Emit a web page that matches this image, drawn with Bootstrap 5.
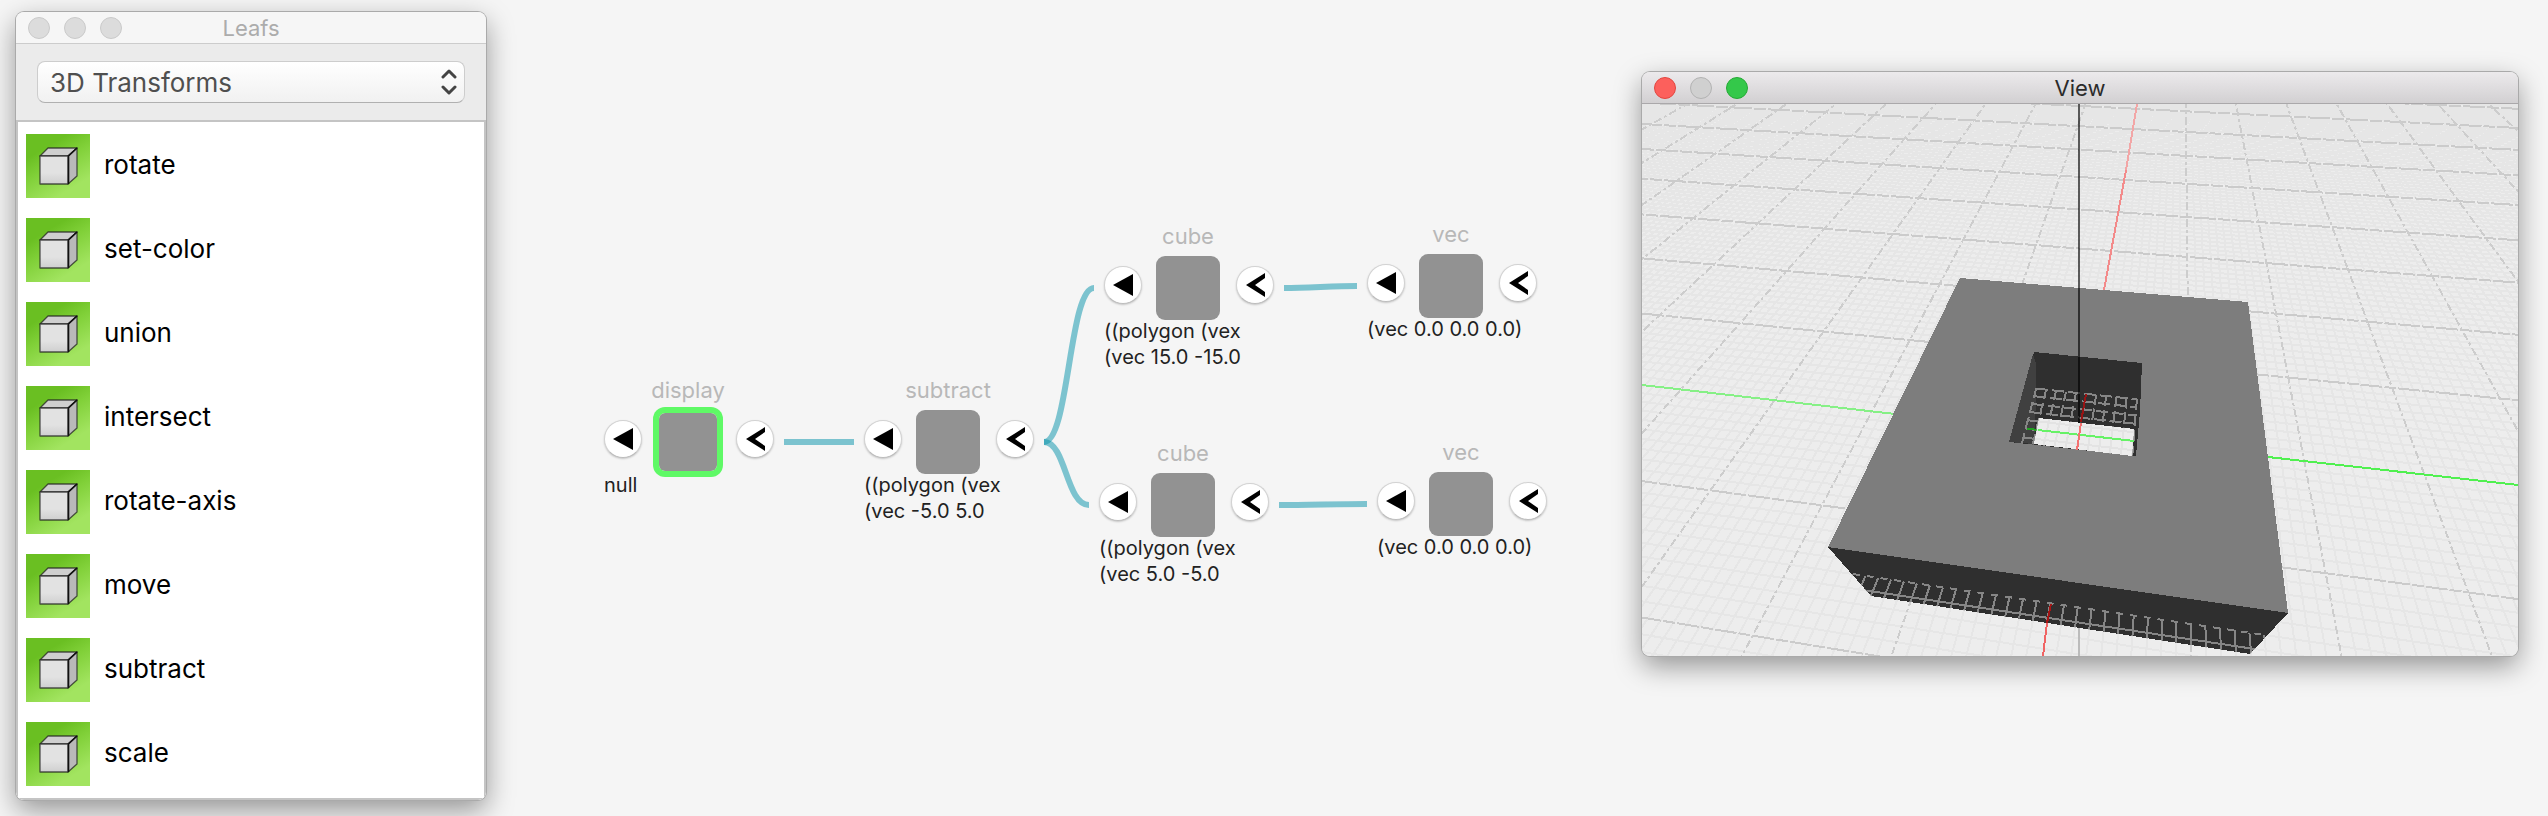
<!DOCTYPE html>
<html lang="en">
<head>
<meta charset="utf-8">
<meta name="viewport" content="width=device-width, initial-scale=1">
<title>Leafs</title>
<link href="https://cdn.jsdelivr.net/npm/bootstrap@5.3.0/dist/css/bootstrap.min.css" rel="stylesheet">
<style>
  body { background: #f5f5f5; font-family: Inter, "Liberation Sans", sans-serif; color: #000; }
  .desktop { padding: 12px 30px 16px 16px; min-height: 100vh; }

  /* windows */
  .win { border-radius: 8px; box-shadow: 0 0 0 1px #aaa, 0 10px 28px rgba(0,0,0,.4); overflow: hidden; }
  .titlebar { height: 32px; padding: 0 12px; display: grid; grid-template-columns: 1fr auto 1fr; align-items: center; border-bottom: 1px solid #ccc; font-size: 22px; line-height: 28px; }
  .titlebar.idle { background: #f6f6f6; color: #acacac; }
  .titlebar.active { background: linear-gradient(#eceaec, #d2d0d2); border-color: #aaa8aa; color: #2b2b2b; }
  .lights { gap: 14px; }
  .light { width: 22px; height: 22px; border-radius: 50%; padding: 0; border: 1px solid #c9c9c9; background: #dcdcdc; }
  .light.close-on { background: #fc605c; border-color: #e2463f; }
  .light.min-off { background: #d0d0d0; border-color: #b2b2b2; }
  .light.zoom-on { background: #34c84a; border-color: #25a935; }

  /* palette */
  .palette { flex: 0 0 470px; }
  .picker { background: #ebebeb; padding: 17px 21px; }
  .picker-box { position: relative; }
  .picker select { appearance: none; width: 100%; height: 42px; padding: 2px 12px 0; border: 1px solid #cdcdcd; border-bottom-color: #b0b0b0; border-radius: 8px; background: linear-gradient(#fff, #f1f1f1); color: #4f4f4f; font-size: 26px; line-height: 36px; }
  .picker svg { position: absolute; right: 8px; top: 8px; pointer-events: none; }
  .leafs { background: #fff; border: 2px solid #c4c4c4; padding: 12px 8px; row-gap: 20px; }
  .leaf { gap: 14px; font-size: 26px; line-height: 32px; }
  .leaf span { padding-bottom: 2px; }

  /* node graph */
  .graph { position: relative; flex: 1 1 0; }
  .graph .wires { position: absolute; left: 0; top: 0; overflow: visible; }
  .wires path { fill: none; stroke: rgba(3,146,170,.5); stroke-width: 6; }
  .node { position: absolute; width: 170px; }
  .node-name { font-size: 22px; line-height: 26px; height: 33px; padding-right: 2px; color: #b8b8b8; }
  .tile { width: 64px; height: 64px; margin-right: 2px; border-radius: 9px; background: #929292; }
  .tile.chosen { background-clip: padding-box; border: 3px solid #5ff966; box-shadow: 0 0 0 3px #5ff966; }
  .knob { width: 38px; height: 38px; margin-top: 10px; padding: 0; border: 1px solid #d2d2d2; border-bottom-color: #bcbcbc; border-radius: 50%; background: #fff; box-shadow: 0 1px 2px rgba(0,0,0,.2); display: grid; place-items: center; }
  .node-value { margin-top: -2px; font-size: 20px; line-height: 26px; color: #222; white-space: pre; }

  /* viewer */
  .viewer { flex: 0 1 876px; margin-top: 60px; }
  .viewer svg.scene { display: block; width: 100%; height: auto; background: #ededed; }
</style>
</head>
<body>
<main class="desktop d-flex align-items-start">

  <section class="palette win" aria-label="Leafs">
    <header class="titlebar idle">
      <div class="lights d-flex">
        <button class="light" aria-label="Close"></button><button class="light" aria-label="Minimize"></button><button class="light" aria-label="Zoom"></button>
      </div>
      <span>Leafs</span>
    </header>
    <div class="picker">
      <div class="picker-box">
        <select aria-label="Category"><option>3D Transforms</option></select>
        <svg width="16" height="26" viewBox="0 0 16 26" fill="none" stroke="#444" stroke-width="3" stroke-linecap="round" stroke-linejoin="round"><path d="M2 8 8 2l6 6M2 18l6 6 6-6"/></svg>
      </div>
    </div>
    <ul class="leafs list-unstyled d-flex flex-column mb-0" id="leafs"></ul>
  </section>

  <section class="graph" id="graph" aria-label="Graph">
    <svg class="wires" width="1" height="1">
      <path d="M298 430H368"/>
      <path d="M558 430C583 430 583 276 608 276"/>
      <path d="M558 430C580 430 580 493 603 493"/>
      <path d="M798 276C822 276 847 274 871 274"/>
      <path d="M793 493C822 493 852 492 881 492"/>
    </svg>
  </section>

  <section class="viewer win" aria-label="View">
    <header class="titlebar active">
      <div class="lights d-flex">
        <button class="light close-on" aria-label="Close"></button><button class="light min-off" aria-label="Minimize"></button><button class="light zoom-on" aria-label="Zoom"></button>
      </div>
      <span>View</span>
    </header>
    <svg class="scene" viewBox="1642 104 876 552" shape-rendering="crispEdges" fill="none" stroke-width="2">
      <defs>
        <clipPath id="front"><path d="M1828 547 2288 613 2250 654 1871 596Z"/></clipPath>
        <clipPath id="pit"><path d="M2034 352 2142 363 2140 412 2136 456 2009 442Z"/></clipPath>
        <clipPath id="floor"><path d="M2039 418 2134 429 2132 456 2034 444Z"/></clipPath>
      </defs>
      <path id="minor" stroke="#e6e6e6"/>
      <path id="rows" stroke="#cbcbcb" stroke-dasharray="22 2 12 2"/>
      <path id="cols" stroke="#cdcdcd" stroke-dasharray="8 3 3 3"/>
      <path d="M2137 104 2126 170" stroke="#f2a6a6"/>
      <path d="M2126 170 2104 290" stroke="#f38a8a"/>
      <path d="M1642 385 1895 414" stroke="#86f086"/>
      <path d="M2268 457 2518 485" stroke="#50f050"/>
      <path d="M2047 623 2043 656" stroke="#f06464"/>
      <path d="M2079 625V656" stroke="#bbb"/>
      <path d="M1960 278 2248 302 2288 613 1828 547Z" fill="#7d7d7d"/>
      <path d="M1828 547 2288 613 2250 654 1871 596Z" fill="#2f2f2f"/>
      <g clip-path="url(#front)"><path id="frontgrid" stroke="#868686"/><path id="frontedge" stroke="#868686" stroke-dasharray="7 7"/></g>
      <path d="M2051 604 2047 623" stroke="#a41414"/>
      <path d="M2034 352 2142 363 2140 412 2136 456 2009 442Z" fill="#2f2f2f"/>
      <path d="M2033 354 2036 364 2036 400 2034 444 2009 442Z" fill="#404040"/>
      <g clip-path="url(#pit)"><path id="pitgrid" stroke="#868686" stroke-dasharray="12 4"/></g>
      <path d="M2086 394 2081 422" stroke="#981414"/>
      <path d="M2027 429 2040 430" stroke="#22a022"/>
      <path d="M2039 418 2134 429 2132 456 2034 444Z" fill="#ededed"/>
      <g clip-path="url(#floor)"><path id="floorgrid" stroke="#e3e3e3"/></g>
      <path d="M2038 430 2134 441" stroke="#66f266"/>
      <path d="M2081 423 2077 450" stroke="#f47272"/>
      <path d="M2079 104V423" stroke="#000" stroke-opacity=".62"/>
    </svg>
  </section>
</main>

<script src="https://cdn.jsdelivr.net/npm/bootstrap@5.3.0/dist/js/bootstrap.bundle.min.js"></script>
<script>
  // palette entries
  const cube = `<svg width="64" height="64" viewBox="0 0 64 64" aria-hidden="true">
    <defs><linearGradient id="gr" x1="0.2" y1="0" x2="0.8" y2="1"><stop offset=".2" stop-color="#6abf22"/><stop offset=".45" stop-color="#80d038"/><stop offset=".85" stop-color="#a2e460"/></linearGradient>
    <linearGradient id="fc" x1="0" y1="0" x2="0" y2="1"><stop offset=".6" stop-color="#e2e2e2"/><stop offset="1" stop-color="#cfcfcf"/></linearGradient></defs>
    <rect width="64" height="64" fill="url(#gr)"/>
    <g stroke="#222" stroke-opacity=".75" stroke-width="1.3" stroke-linejoin="round">
    <path fill="#cfcfcf" d="M14 22 22 14H51L42 22Z"/><path fill="#b9b9b9" d="M42 22 51 14V42L42 50Z"/><path fill="url(#fc)" d="M14 22H42V50H14Z"/></g>
    <path d="M42.500 50V22L51 14" fill="none" stroke="#111" stroke-width="1.600"/></svg>`;
  document.getElementById('leafs').innerHTML =
    ['rotate','set-color','union','intersect','rotate-axis','move','subtract','scale']
    .map(n => `<li class="leaf d-flex align-items-center">${cube}<span>${n}</span></li>`).join('');

  // graph nodes: left edge and top of the name, relative to the graph area
  const nodes = [
    [118, 365, 'display', 'null', true],
    [378, 365, 'subtract', '((polygon (vex\n(vec -5.0 5.0'],
    [618, 211, 'cube', '((polygon (vex\n(vec 15.0 -15.0'],
    [881, 209, 'vec', '(vec 0.0 0.0 0.0)'],
    [613, 428, 'cube', '((polygon (vex\n(vec 5.0 -5.0'],
    [891, 427, 'vec', '(vec 0.0 0.0 0.0)']
  ];
  const out = '<svg width="24" height="24"><path d="M2 12 22 1V23Z"/></svg>';
  const inn = '<svg width="24" height="24"><path d="M3 12 22 0V5L12 12 22 19V24Z"/></svg>';
  for (const [x, y, name, value, chosen] of nodes) {
    document.getElementById('graph').insertAdjacentHTML('beforeend',
      `<div class="node" style="left:${x}px;top:${y}px"><div class="node-name text-center">${name}</div>
       <div class="d-flex justify-content-between align-items-start"><button class="knob" aria-label="Output">${out}</button><div class="tile${chosen ? ' chosen' : ''}"></div><button class="knob" aria-label="Input">${inn}</button></div>
       <div class="node-value">${value}</div></div>`);
  }

  // ground plane: perspective projection of grid coordinates (u, v)
  const P = (u, v) => {
    const w = 1 - .021 * u + .1445 * v;
    return (2079 + (107.85 * u + 15.03 * v) / w).toFixed(1) + ' ' + (434.9 + (12.32 * u - 87.9 * v) / w).toFixed(1);
  };
  const seg = (a, b, c, d) => `M${P(a, b)}L${P(c, d)}`;
  function grid(u0, u1, v0, v1, skip) {
    let d = '';
    for (let i = Math.round(u0 * 10); i <= Math.round(u1 * 10); i++) if (!skip || i % 10) d += seg(i / 10, v0, i / 10, v1);
    for (let i = Math.round(v0 * 10); i <= Math.round(v1 * 10); i++) if (!skip || i % 10) d += seg(u0, i / 10, u1, i / 10);
    return d;
  }
  const set = (id, d) => document.getElementById(id).setAttribute('d', d);
  set('minor', grid(-16, 16, -3, 12, true));
  let cols = '', rows = '';
  for (let i = -16; i <= 16; i++) if (i) cols += seg(i, -3, i, 12);
  for (let i = -3; i <= 12; i++) if (i) rows += seg(-16, i, 16, i);
  set('cols', cols);
  set('rows', rows);
  let fg = '';
  for (let i = -20; i <= 20; i++) fg += seg(i / 10, -1.5, i / 10, -2);
  fg += seg(-2, -1.6, 2, -1.6) + seg(-2, -1.7, 2, -1.7);
  set('frontgrid', fg);
  set('frontedge', seg(-1.5, -1.5, 1.5, -1.5));
  set('pitgrid', grid(-.5, .5, -.5, .5));
  set('floorgrid', grid(-.5, .5, -.5, .5));
</script>
</body>
</html>
